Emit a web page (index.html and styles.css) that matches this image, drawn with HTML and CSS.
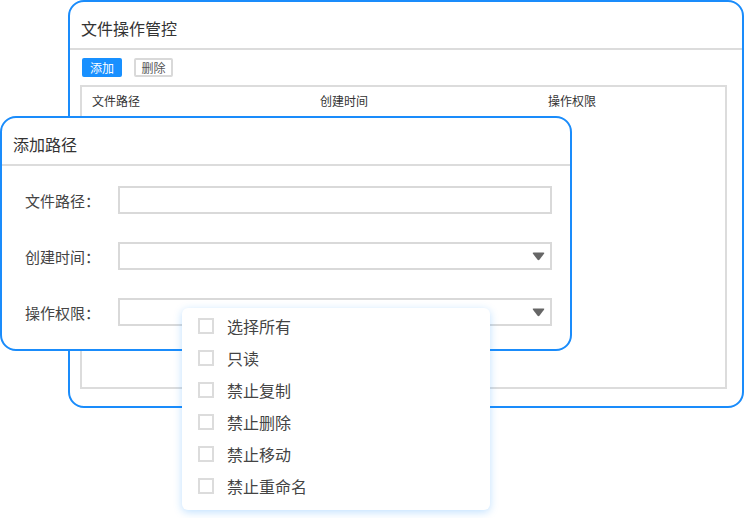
FILE: index.html
```html
<!DOCTYPE html>
<html lang="zh">
<head>
<meta charset="utf-8">
<link rel="stylesheet" href="styles.css">
</head>
<body>
<div class="desk">
  <section class="win win-back">
    <header class="win-head">文件操作管控</header>
    <div class="win-body">
      <div class="toolbar">
        <button class="btn btn-primary">添加</button>
        <button class="btn btn-default">删除</button>
      </div>
      <div class="table">
        <div class="thead">
          <span class="th">文件路径</span>
          <span class="th">创建时间</span>
          <span class="th">操作权限</span>
        </div>
      </div>
    </div>
  </section>

  <section class="win win-front">
    <header class="win-head">添加路径</header>
    <div class="form">
      <div class="row">
        <label class="label">文件路径：</label>
        <div class="input"></div>
      </div>
      <div class="row">
        <label class="label">创建时间：</label>
        <div class="input select">
          <svg class="arrow" width="13" height="9" viewBox="0 0 13 9"><path d="M1.6 0.5 H11.4 Q12.9 0.5 12 1.8 L7.6 7.6 Q6.5 8.9 5.4 7.6 L1 1.8 Q0.1 0.5 1.6 0.5 Z" fill="#666"/></svg>
        </div>
      </div>
      <div class="row">
        <label class="label">操作权限：</label>
        <div class="input select">
          <svg class="arrow" width="13" height="9" viewBox="0 0 13 9"><path d="M1.6 0.5 H11.4 Q12.9 0.5 12 1.8 L7.6 7.6 Q6.5 8.9 5.4 7.6 L1 1.8 Q0.1 0.5 1.6 0.5 Z" fill="#666"/></svg>
        </div>
      </div>
    </div>
  </section>

  <ul class="menu">
    <li class="opt"><span class="check"></span>选择所有</li>
    <li class="opt"><span class="check"></span>只读</li>
    <li class="opt"><span class="check"></span>禁止复制</li>
    <li class="opt"><span class="check"></span>禁止删除</li>
    <li class="opt"><span class="check"></span>禁止移动</li>
    <li class="opt"><span class="check"></span>禁止重命名</li>
  </ul>
</div>
</body>
</html>
```

FILE: styles.css
```css
* { box-sizing: border-box; }
html, body { margin: 0; padding: 0; background: #fff; }
body {
  font-family: "Noto Sans CJK SC", "Noto Sans", sans-serif;
  color: #333;
}
.desk {
  position: relative;
  width: 744px;
  height: 518px;
  overflow: hidden;
}
.win {
  position: absolute;
  background: #fff;
  border: 2px solid #1a8cfb;
  border-radius: 16px;
  display: flex;
  flex-direction: column;
}
.win-back { left: 68px; top: 0; width: 676px; height: 408px; }
.win-front { left: 0; top: 116px; width: 572px; height: 235px; z-index: 2; }
.win-head {
  height: 48px;
  border-bottom: 2px solid #dcdcdc;
  padding: 6px 0 0 11px;
  font-size: 16px;
  line-height: 40px;
  color: #333;
  flex: none;
}
.win-body {
  flex: 1;
  display: flex;
  flex-direction: column;
  padding: 8px 15px 17px 10px;
}
.toolbar {
  display: flex;
  gap: 12px;
  padding-left: 2px;
  height: 19px;
}
.btn {
  width: 40px;
  height: 19px;
  padding: 0;
  font-family: inherit;
  font-size: 12px;
  line-height: 15px;
  border-radius: 2px;
}
.btn-primary { background: #1890ff; border: 2px solid #1890ff; color: #fff; }
.btn-default { background: #fff; border: 2px solid #d9d9d9; color: #555; width: 39px; }
.table {
  margin-top: 8px;
  flex: 1;
  border: 2px solid #dcdcdc;
}
.thead {
  display: grid;
  grid-template-columns: 228px 228px 1fr;
  padding: 4px 10px 0;
  font-size: 12px;
  line-height: 20px;
  color: #333;
}
.form {
  padding: 20px 18px 0 23px;
  display: flex;
  flex-direction: column;
  gap: 28px;
}
.row {
  display: flex;
  align-items: center;
  height: 28px;
}
.label {
  width: 93px;
  flex: none;
  font-size: 15px;
  color: #444;
}
.input {
  flex: 1;
  height: 28px;
  border: 2px solid #d9d9d9;
  background: #fff;
}
.select {
  display: flex;
  justify-content: flex-end;
  align-items: center;
  padding-right: 5px;
}
.arrow { display: block; margin-top: 1px; }
.menu {
  position: absolute;
  left: 182px;
  top: 308px;
  width: 308px;
  height: 202px;
  margin: 0;
  padding: 2px 0 8px 16px;
  list-style: none;
  background: #fff;
  border-radius: 6px;
  box-shadow: 0 2px 8px rgba(24, 144, 255, 0.28);
  z-index: 5;
}
.opt {
  height: 32px;
  display: flex;
  align-items: center;
  font-size: 16px;
  color: #444;
}
.check {
  width: 16px;
  height: 16px;
  border: 2px solid #dcdcdc;
  margin-right: 13px;
  flex: none;
}
```
